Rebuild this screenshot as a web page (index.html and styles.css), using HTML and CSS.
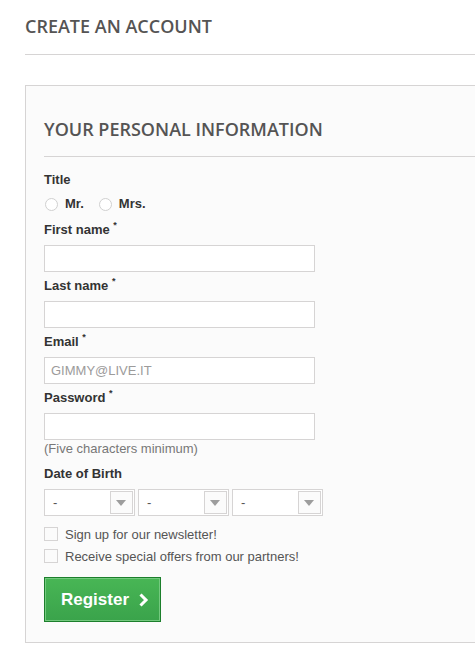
FILE: index.html
```html
<!DOCTYPE html>
<html>
<head>
<meta charset="utf-8">
<link rel="stylesheet" href="styles.css">
</head>
<body>
<div class="page">
  <h1 class="page-heading">Create an account</h1>
  <form class="box">
    <h3 class="box-heading">Your personal information</h3>
    <div class="field">
      <div class="label">Title</div>
      <div class="radios">
        <label class="radio"><input type="radio" name="g"><span>Mr.</span></label>
        <label class="radio"><input type="radio" name="g"><span>Mrs.</span></label>
      </div>
    </div>
    <div class="field">
      <div class="label">First name <sup>*</sup></div>
      <input class="text" type="text">
    </div>
    <div class="field">
      <div class="label">Last name <sup>*</sup></div>
      <input class="text" type="text">
    </div>
    <div class="field">
      <div class="label">Email <sup>*</sup></div>
      <input class="text" type="text" placeholder="GIMMY@LIVE.IT">
    </div>
    <div class="field">
      <div class="label">Password <sup>*</sup></div>
      <input class="text" type="password">
      <div class="hint">(Five characters minimum)</div>
    </div>
    <div class="field">
      <div class="label">Date of Birth</div>
      <div class="selects">
        <div class="select"><span class="val">-</span><span class="arrow"></span></div>
        <div class="select"><span class="val">-</span><span class="arrow"></span></div>
        <div class="select"><span class="val">-</span><span class="arrow"></span></div>
      </div>
    </div>
    <div class="checks">
      <label class="check"><input type="checkbox"><span>Sign up for our newsletter!</span></label>
      <label class="check"><input type="checkbox"><span>Receive special offers from our partners!</span></label>
    </div>
    <button type="button" class="btn">
      <span>Register</span>
      <svg width="11" height="14" viewBox="0 0 11 14"><path d="M2.5 1.5 L8 7 L2.5 12.5" fill="none" stroke="#fff" stroke-width="3"/></svg>
    </button>
  </form>
</div>
</body>
</html>
```

FILE: styles.css
```css
html, body {
  margin: 0;
  padding: 0;
  overflow: hidden;
  background: #fff;
}
.page {
  padding-left: 25px;
  font-family: "Liberation Sans", Arial, sans-serif;
  font-size: 13px;
  color: #333;
}
.page-heading {
  margin: 0 0 30px 0;
  padding: 15px 0 17px 0;
  font-family: "Open Sans", sans-serif;
  font-weight: 600;
  font-size: 18px;
  line-height: 22px;
  text-transform: uppercase;
  color: #555454;
  border-bottom: 1px solid #d6d4d4;
}
.box {
  margin: 0;
  padding: 0 0 20px 18px;
  background: #fbfbfb;
  border: 1px solid #d6d4d4;
  border-right: none;
}
.box-heading {
  margin: 0 0 14px 0;
  padding: 33px 0 16px 0;
  font-family: "Open Sans", sans-serif;
  font-weight: 600;
  font-size: 18px;
  line-height: 21px;
  text-transform: uppercase;
  color: #555454;
  border-bottom: 1px solid #d6d4d4;
}
.field {
  margin-bottom: 5px;
}
.label {
  font-weight: bold;
  line-height: 18px;
  margin-bottom: 6px;
  color: #333;
}
.label sup {
  font-size: 9px;
  line-height: 0;
  vertical-align: 6px;
  color: #333;
}
.radios {
  display: flex;
  gap: 14px;
  line-height: 18px;
  margin-top: 1px;
  margin-bottom: 8px;
}
.radio {
  display: flex;
  align-items: center;
  gap: 7px;
  font-weight: bold;
}
.radio input {
  appearance: none;
  -webkit-appearance: none;
  margin: 0 0 0 1px;
  width: 13px;
  height: 13px;
  border: 1px solid #d0d0d0;
  border-radius: 50%;
  background: #fff;
  box-sizing: border-box;
}
.text {
  display: block;
  box-sizing: border-box;
  width: 271px;
  height: 27px;
  margin: 0;
  padding: 0 6px;
  border: 1px solid #d6d4d4;
  background: #fff;
  font-family: "Liberation Sans", Arial, sans-serif;
  font-size: 13px;
  color: #333;
  outline: none;
}
.text::placeholder {
  color: #9c9b9b;
}
.hint {
  line-height: 18px;
  margin-bottom: 7px;
  color: #777;
}
.selects {
  display: flex;
  gap: 3px;
  margin-bottom: 7px;
}
.select {
  box-sizing: border-box;
  width: 91px;
  height: 27px;
  border: 1px solid #d6d4d4;
  background: #fff;
  display: flex;
  align-items: center;
  justify-content: space-between;
  padding: 1px;
}
.select .val {
  padding-left: 7px;
  color: #555;
}
.select .arrow {
  box-sizing: border-box;
  width: 23px;
  height: 100%;
  border: 1px solid #d6d4d4;
  background: #fbfbfb;
  position: relative;
}
.select .arrow::after {
  content: "";
  position: absolute;
  left: 5px;
  top: 8px;
  border-left: 5px solid transparent;
  border-right: 5px solid transparent;
  border-top: 6px solid #9d9d9d;
}
.checks {
  margin-bottom: 10px;
}
.check {
  display: flex;
  align-items: center;
  gap: 7px;
  height: 22px;
  color: #555;
}
.check input {
  appearance: none;
  -webkit-appearance: none;
  margin: 0;
  width: 14px;
  height: 14px;
  border: 1px solid #d6d4d4;
  background: #fbfbfb;
  box-sizing: border-box;
}
.btn {
  display: flex;
  align-items: center;
  gap: 9px;
  box-sizing: border-box;
  width: 117px;
  height: 45px;
  margin: 0;
  padding: 0 0 0 16px;
  border: 1px solid #1c7f2c;
  box-shadow: inset 0 0 0 1px #74c97f;
  background: linear-gradient(#48b655, #3aa34b);
  color: #fff;
  font-family: "Liberation Sans", Arial, sans-serif;
  font-weight: bold;
  font-size: 17px;
  cursor: pointer;
}
.btn svg {
  display: block;
}
```
